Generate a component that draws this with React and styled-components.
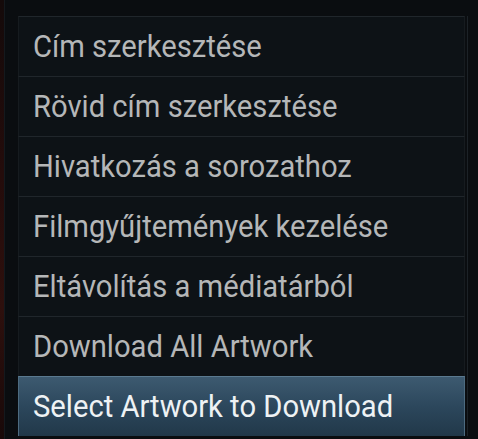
import styled, { createGlobalStyle } from "styled-components";

const GlobalStyle = createGlobalStyle`
  html, body {
    margin: 0;
    padding: 0;
    background: #0a0d10;
    width: 478px;
    height: 439px;
    overflow: hidden;
  }
`;

const Screen = styled.div`
  display: flex;
  width: 478px;
  height: 439px;
  background: #090c0f;
`;

const Backdrop = styled.div`
  width: 4px;
  background: linear-gradient(180deg, #140a0a 0%, #240c0b 40%, #2e100d 70%, #180909 100%);
`;

const Dialog = styled.div`
  flex: 1;
  display: flex;
  padding: 16px 10px 3px 1px;
  border-left: 1px solid #14191d;
  background: #0a0d10;
`;

const Menu = styled.ul`
  list-style: none;
  margin: 0 0 0 12px;
  padding: 0 2px 0 0;
  flex: 1;
  display: flex;
  flex-direction: column;
  border-right: 1px solid #1c2227;
`;

const Item = styled.li`
  height: 60px;
  box-sizing: border-box;
  display: flex;
  align-items: center;
  padding-left: 14px;
  padding-bottom: 1px;
  border-top: 1px solid ${(p) => (p.$active ? "#5b7a90" : "#20262b")};
  border-left: 1px solid ${(p) => (p.$active ? "#4d6b80" : "#161b1f")};
  border-right: 1px solid ${(p) => (p.$active ? "#4d6b80" : "#161b1f")};
  background: ${(p) =>
    p.$active
      ? "linear-gradient(180deg, #3d5a70 0%, #2c475c 50%, #213849 100%)"
      : "#0d1216"};
`;

const Label = styled.span`
  display: inline-block;
  white-space: nowrap;
  font-family: Roboto, "Liberation Sans", sans-serif;
  font-size: 32px;
  line-height: 1;
  transform: scaleX(0.912);
  transform-origin: left center;
  color: ${(p) => (p.$active ? "#eef2f4" : "#b5b7b8")};
`;

const items = [
  "Cím szerkesztése",
  "Rövid cím szerkesztése",
  "Hivatkozás a sorozathoz",
  "Filmgyűjtemények kezelése",
  "Eltávolítás a médiatárból",
  "Download All Artwork",
  "Select Artwork to Download",
];

export default function App() {
  return (
    <>
      <GlobalStyle />
      <Screen>
        <Backdrop />
        <Dialog>
          <Menu>
            {items.map((label, i) => {
              const active = i === items.length - 1;
              return (
                <Item key={label} $active={active}>
                  <Label $active={active}>{label}</Label>
                </Item>
              );
            })}
          </Menu>
        </Dialog>
      </Screen>
    </>
  );
}
